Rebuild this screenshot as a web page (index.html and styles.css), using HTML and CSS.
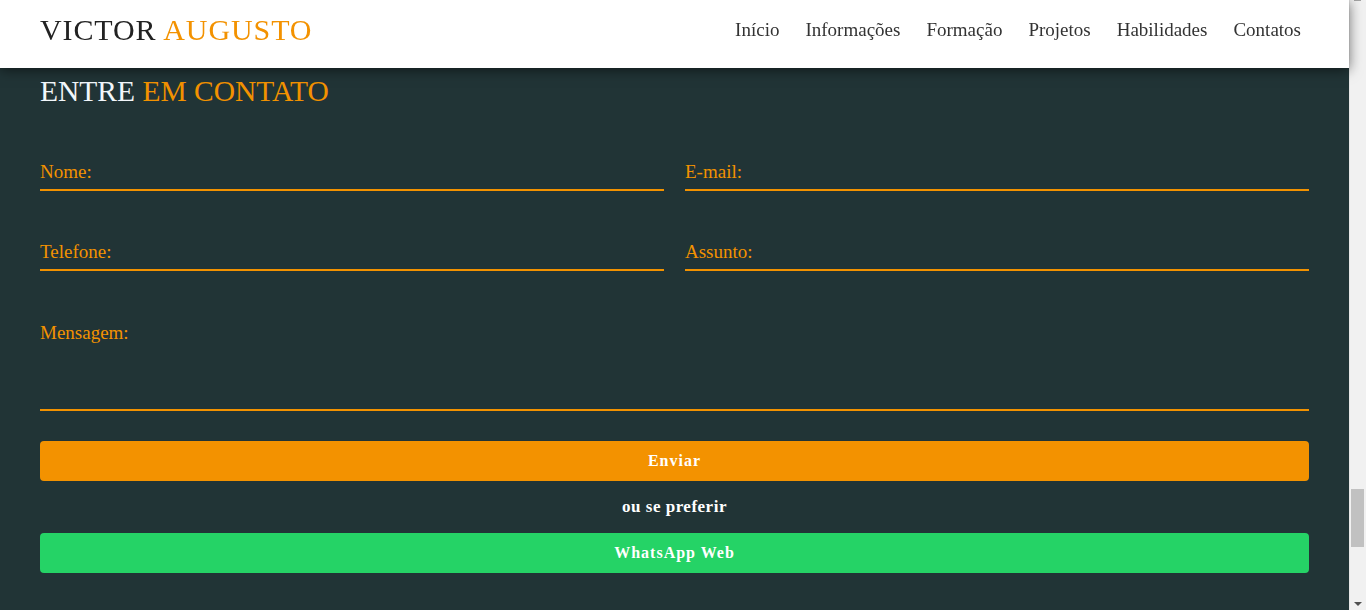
FILE: index.html
```html
<!DOCTYPE html>
<html lang="pt-BR">
<head>
<meta charset="utf-8">
<title>Victor Augusto - Contato</title>
<link rel="stylesheet" href="styles.css">
</head>
<body>
<header class="topbar">
  <a class="logo" href="#">VICTOR <span class="accent">AUGUSTO</span></a>
  <nav class="menu">
    <a href="#">Início</a>
    <a href="#">Informações</a>
    <a href="#">Formação</a>
    <a href="#">Projetos</a>
    <a href="#">Habilidades</a>
    <a href="#">Contatos</a>
  </nav>
</header>
<main class="contact">
  <h2 class="title">ENTRE <span class="accent">EM CONTATO</span></h2>
  <form class="form">
    <div class="grid">
      <input class="field" type="text" placeholder="Nome:">
      <input class="field" type="email" placeholder="E-mail:">
      <input class="field" type="tel" placeholder="Telefone:">
      <input class="field" type="text" placeholder="Assunto:">
    </div>
    <textarea class="field message" placeholder="Mensagem:"></textarea>
    <button class="btn send" type="button">Enviar</button>
    <p class="or">ou se preferir</p>
    <a class="btn whats" href="#">WhatsApp Web</a>
  </form>
</main>
<div class="scrollbar" aria-hidden="true">
  <span class="arrow-up"></span>
  <span class="thumb"></span>
  <span class="arrow-down"></span>
</div>
</body>
</html>
```
FILE: styles.css
```css
body {
  margin: 0;
  padding-right: 17px;
  background: #213436;
  font-family: "Liberation Serif", "Times New Roman", serif;
}
.accent {
  color: #f39200;
}
.topbar {
  position: fixed;
  top: 0;
  left: 0;
  right: 17px;
  height: 68px;
  box-sizing: border-box;
  padding: 0 48px 8px 40px;
  background: #fff;
  display: flex;
  align-items: center;
  justify-content: space-between;
  box-shadow: 0 2px 12px rgba(0, 0, 0, 0.55);
  z-index: 10;
}
.logo {
  font-size: 30px;
  letter-spacing: 0.9px;
  color: #222;
  text-decoration: none;
  line-height: 1;
}
.menu {
  display: flex;
  gap: 26px;
}
.menu a {
  font-size: 19px;
  color: #333;
  text-decoration: none;
}
.contact {
  padding: 72px 40px 40px;
}
.title {
  margin: 0;
  font-weight: normal;
  font-size: 29.5px;
  line-height: 38px;
  color: #f2f7fb;
}
.form {
  margin-top: 48px;
}
.grid {
  display: grid;
  grid-template-columns: 1fr 1fr;
  column-gap: 21px;
  row-gap: 47px;
}
.field {
  display: block;
  width: 100%;
  box-sizing: border-box;
  height: 33px;
  padding: 0 0 3px;
  border: 0;
  border-bottom: 2px solid #f39200;
  background: transparent;
  font-family: inherit;
  font-size: 19px;
  color: #fff;
  outline: none;
}
.field::placeholder {
  color: #f39200;
  opacity: 1;
}
.message {
  margin-top: 48px;
  height: 92px;
  padding: 3px 0 0;
  resize: none;
}
.btn {
  display: block;
  width: 100%;
  box-sizing: border-box;
  height: 40px;
  border: 0;
  border-radius: 4px;
  color: #fff;
  font-family: inherit;
  font-size: 16px;
  font-weight: bold;
  letter-spacing: 1px;
  text-align: center;
  line-height: 40px;
  text-decoration: none;
  padding: 0;
}
.send {
  margin-top: 30px;
  background: #f39200;
}
.whats {
  background: #25d366;
}
.or {
  margin: 0;
  height: 52px;
  line-height: 52px;
  text-align: center;
  color: #fff;
  font-size: 17px;
  font-weight: bold;
  letter-spacing: 0.5px;
}
.scrollbar {
  position: fixed;
  top: 0;
  right: 0;
  bottom: 0;
  width: 17px;
  background: #f1f1f1;
  border-left: 1px solid #e6e6e6;
  box-sizing: border-box;
}
.thumb {
  position: absolute;
  left: 1px;
  right: 2px;
  top: 489px;
  height: 58px;
  background: #c1c1c1;
}
.arrow-up {
  position: absolute;
  left: 4px;
  top: 0;
  width: 7px;
  height: 1px;
  background: #a3a3a3;
}
.arrow-down {
  position: absolute;
  left: 4px;
  bottom: 4px;
  width: 0;
  height: 0;
  border-left: 4px solid transparent;
  border-right: 4px solid transparent;
  border-top: 4px solid #505050;
}
```
